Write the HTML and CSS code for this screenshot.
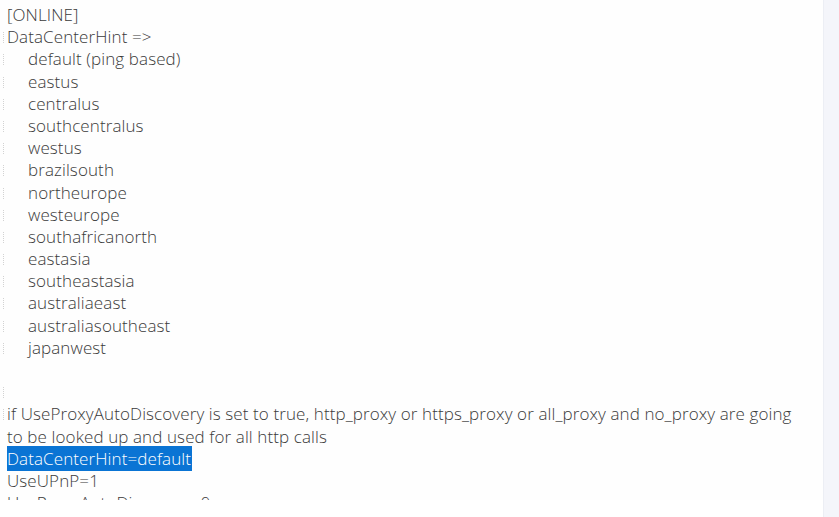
FILE: index.html
```html
<!DOCTYPE html>
<html>
<head>
<meta charset="utf-8">
<link rel="stylesheet" href="styles.css">
</head>
<body>
<div class="page">
  <div class="editor">
    <div class="line first">[ONLINE]</div>
    <div class="line">DataCenterHint =&gt;</div>
    <div class="line ind">default (ping based)</div>
    <div class="line ind">eastus</div>
    <div class="line ind">centralus</div>
    <div class="line ind">southcentralus</div>
    <div class="line ind">westus</div>
    <div class="line ind">brazilsouth</div>
    <div class="line ind">northeurope</div>
    <div class="line ind">westeurope</div>
    <div class="line ind">southafricanorth</div>
    <div class="line ind">eastasia</div>
    <div class="line ind">southeastasia</div>
    <div class="line ind">australiaeast</div>
    <div class="line ind">australiasoutheast</div>
    <div class="line ind">japanwest</div>
    <div class="line empty"></div>
    <div class="line">&nbsp;</div>
    <div class="line">if UseProxyAutoDiscovery is set to true, http_proxy or https_proxy or all_proxy and no_proxy are going</div>
    <div class="line nomark">to be looked up and used for all http calls</div>
    <div class="line nomark"><span class="sel">DataCenterHint=default</span></div>
    <div class="line nomark">UseUPnP=1</div>
    <div class="line nomark">UseProxyAutoDiscovery=0</div>
  </div>
  <div class="side"></div>
</div>
</body>
</html>
```

FILE: styles.css
```css
html, body {
  margin: 0;
  padding: 0;
  background: #ffffff;
}
.page {
  display: flex;
  width: 839px;
  height: 517px;
}
.editor {
  width: 823px;
  height: 500px;
  overflow: hidden;
  background: #fefefe;
  padding-top: 4px;
  box-sizing: border-box;
  font-family: "Open Sans", sans-serif;
  font-weight: 300;
  font-size: 17px;
  letter-spacing: 0.1px;
  color: #3a3a3a;
}
.side {
  flex: 1;
  height: 517px;
  background: #f4f5fa;
  border-left: 1px solid #eceef4;
}
.line {
  height: 22.2px;
  line-height: 22.2px;
  white-space: nowrap;
  padding-left: 7px;
  position: relative;
}
.line::before {
  content: "";
  position: absolute;
  left: 3px;
  top: 6px;
  height: 11px;
  border-left: 1px dotted #d2d2d2;
}
.line.first::before,
.line.nomark::before,
.line.empty::before {
  display: none;
}
.ind {
  padding-left: 28px;
}
.sel {
  background: #0a74d4;
  color: #ffffff;
  padding: 1px 1px 1px 0;
}
```
